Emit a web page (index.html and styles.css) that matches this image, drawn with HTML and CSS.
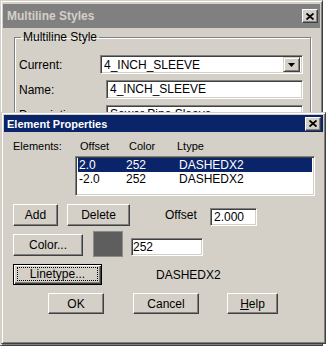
FILE: index.html
```html
<!DOCTYPE html>
<html lang="en">

<head>
    <meta charset="utf-8">
    <title>Multiline Styles</title>
    <link rel="stylesheet" href="styles.css">
</head>

<body>
    <!-- Parent dialog (inactive) -->
    <div class="main">
        <div class="titlebar inactive">
            <span class="title">Multiline Styles</span>
            <span class="close-btn">
                <svg width="8" height="7" viewBox="0 0 8 7"><path d="M0.5 0.5 L7.5 6.5 M7.5 0.5 L0.5 6.5" stroke="#000" stroke-width="1.8" fill="none"/></svg>
            </span>
        </div>
        <fieldset class="group">
            <legend>Multiline Style</legend>
            <div class="field-row first">
                <label class="lbl lbl-current">Current:</label>
                <div class="combo">
                    <span class="combo-text">4_INCH_SLEEVE</span>
                    <span class="combo-btn">
                        <svg width="7" height="4" viewBox="0 0 7 4"><polygon points="0,0 7,0 3.5,4" fill="#000"/></svg>
                    </span>
                </div>
            </div>
            <div class="field-row">
                <label class="lbl">Name:</label>
                <div class="textbox wide">4_INCH_SLEEVE</div>
            </div>
            <div class="field-row">
                <label class="lbl">Description:</label>
                <div class="textbox wide">Sewer Pipe Sleeve</div>
            </div>
        </fieldset>
    </div>

    <!-- Child dialog on top -->
    <div class="dlg">
        <div class="titlebar active">
            <span class="title">Element Properties</span>
            <span class="close-btn">
                <svg width="8" height="7" viewBox="0 0 8 7"><path d="M0.5 0.5 L7.5 6.5 M7.5 0.5 L0.5 6.5" stroke="#000" stroke-width="1.8" fill="none"/></svg>
            </span>
        </div>
        <div class="dlg-body">
            <div class="head-row">
                <span class="h-label">Elements:</span>
                <span class="h-offset">Offset</span>
                <span class="h-color">Color</span>
                <span>Ltype</span>
            </div>
            <div class="listbox">
                <div class="list-row selected">
                    <span class="c-offset">2.0</span><span class="c-color">252</span><span>DASHEDX2</span>
                </div>
                <div class="list-row">
                    <span class="c-offset">-2.0</span><span class="c-color">252</span><span>DASHEDX2</span>
                </div>
            </div>

            <div class="row row-add">
                <button class="btn btn-add">Add</button>
                <button class="btn btn-delete">Delete</button>
                <span class="offset-lbl">Offset</span>
                <div class="textbox offset-box">2.000</div>
            </div>

            <div class="row row-color">
                <button class="btn btn-color">Color...</button>
                <span class="swatch"></span>
                <div class="textbox color-box">252</div>
            </div>

            <div class="row row-ltype">
                <button class="btn btn-ltype default"><span class="focus">Linetype...</span></button>
                <span class="ltype-name">DASHEDX2</span>
            </div>

            <div class="row row-ok">
                <button class="btn btn-ok">OK</button>
                <button class="btn btn-cancel">Cancel</button>
                <button class="btn btn-help"><u>H</u>elp</button>
            </div>
        </div>
    </div>
</body>

</html>
```

FILE: styles.css
```css
body {
    margin: 0;
    background: #fff;
    font-family: 'Liberation Sans', Arial, sans-serif;
    font-size: 11px;
    color: #000;
}

/* raised window frame */
.main,
.dlg {
    box-sizing: border-box;
    background-color: #d4d0c8;
    border: 1px solid;
    border-color: #d4d0c8 #404040 #404040 #d4d0c8;
    box-shadow: inset 1px 1px #fff, inset -1px -1px #808080;
    padding: 2px;
}

.main {
    width: 323px;
    height: 346px;
}

.dlg {
    position: absolute; /* sits over the parent dialog */
    left: 1px;
    top: 112px;
    width: 325px;
    height: 232px;
    display: flex;
    flex-direction: column;
}

.titlebar {
    display: flex;
    align-items: center;
    justify-content: space-between;
    font-weight: bold;
}

.titlebar.inactive {
    height: 24px;
    margin-top: 1px;
    padding: 0 2px 0 4px;
    background-color: #808080;
    color: #d4d0c8;
    font-size: 12px;
}

.titlebar.active {
    height: 17px;
    padding: 0 2px 0 3px;
    background-color: #0a246a;
    color: #fff;
    font-size: 11px;
}

.close-btn {
    box-sizing: border-box;
    width: 16px;
    height: 14px;
    display: flex;
    align-items: center;
    justify-content: center;
    background-color: #d4d0c8;
    border: 1px solid;
    border-color: #fff #404040 #404040 #fff;
    box-shadow: inset -1px -1px #808080;
}

/* group box */
.group {
    margin: 3px 9px 0 11px;
    padding: 0 0 30px 4px;
    border: 1px solid #808080;
    box-shadow: inset 1px 1px #fff, 1px 1px #fff;
}

.group legend {
    margin-left: 2px;
    padding: 0 2px;
    font-size: 12px;
    line-height: 12px;
}

.field-row {
    display: flex;
    align-items: center;
    margin-top: 6px;
}

.field-row.first {
    margin-top: 12px;
}

.lbl {
    width: 87px;
    font-size: 12px;
}

.lbl-current {
    width: 81px;
}

.textbox,
.combo,
.listbox {
    box-sizing: border-box;
    background-color: #fff;
    border: 1px solid;
    border-color: #808080 #fff #fff #808080;
    box-shadow: inset 1px 1px #404040, inset -1px -1px #d4d0c8;
}

.textbox {
    height: 19px;
    padding: 0 3px;
    line-height: 17px;
    white-space: nowrap;
    overflow: hidden;
    font-size: 12px;
}

.textbox.wide {
    width: 197px;
}

.combo {
    width: 203px;
    height: 19px;
    display: flex;
    align-items: center;
    justify-content: space-between;
    padding: 2px;
    font-size: 12px;
}

.combo-text {
    padding-left: 1px;
}

.combo-btn {
    box-sizing: border-box;
    width: 17px;
    height: 15px;
    display: flex;
    align-items: center;
    justify-content: center;
    background-color: #d4d0c8;
    border: 1px solid;
    border-color: #d4d0c8 #404040 #404040 #d4d0c8;
    box-shadow: inset 1px 1px #fff, inset -1px -1px #808080;
}

/* Element Properties body */
.dlg-body {
    padding-left: 9px;
}

.head-row {
    display: flex;
    margin-top: 8px;
    line-height: 12px;
}

.h-label {
    width: 67px;
}

.h-offset {
    width: 49px;
}

.h-color {
    width: 48px;
}

.listbox {
    width: 240px;
    height: 40px;
    margin: 4px 0 0 62px;
    padding: 1px 2px;
}

.list-row {
    display: flex;
    height: 14px;
    line-height: 14px;
    padding-left: 1px;
    font-size: 12px;
}

.list-row.selected {
    background-color: #0a246a;
    color: #fff;
}

.c-offset {
    width: 47px;
}

.c-color {
    width: 53px;
}

.row {
    display: flex;
    align-items: flex-start;
}

.btn {
    box-sizing: border-box;
    height: 22px;
    padding: 0;
    background-color: #d4d0c8;
    border: 1px solid;
    border-color: #fff #404040 #404040 #fff;
    box-shadow: inset -1px -1px #808080;
    font-family: inherit;
    font-size: 12px;
    color: #000;
}

.row-add {
    margin-top: 8px;
}

.btn-add {
    width: 45px;
}

.btn-delete {
    width: 63px;
    margin-left: 9px;
}

.offset-lbl {
    width: 45px;
    margin-left: 35px;
    line-height: 22px;
    font-size: 12px;
}

.offset-box {
    width: 47px;
    height: 18px;
    line-height: 16px;
    margin-top: 4px;
}

.row-color {
    margin-top: 5px;
}

.btn-color {
    width: 70px;
    margin-top: 3px;
}

.swatch {
    box-sizing: border-box;
    width: 30px;
    height: 26px;
    margin-left: 10px;
    background-color: #5e5e5e;
    border: 1px solid #8a8a8a;
}

.color-box {
    width: 72px;
    height: 18px;
    line-height: 16px;
    margin: 7px 0 0 8px;
    padding: 0 1px;
}

.row-ltype {
    margin-top: 7px;
}

.btn-ltype {
    width: 89px;
    height: 21px;
}

.btn.default {
    border: 1px solid #000;
    box-shadow: inset 1px 1px #fff, inset -1px -1px #404040, inset -2px -2px #808080;
}

.focus {
    display: block;
    margin: 2px 3px 3px 3px;
    border: 1px dotted #000;
    line-height: 12px;
}

.ltype-name {
    margin-left: 54px;
    line-height: 22px;
    font-size: 12px;
}

.row-ok {
    margin-top: 7px;
}

.btn-ok {
    width: 56px;
    height: 21px;
    margin-left: 35px;
}

.btn-cancel {
    width: 66px;
    height: 21px;
    margin-left: 29px;
}

.btn-help {
    width: 51px;
    height: 21px;
    margin-left: 28px;
}
```
